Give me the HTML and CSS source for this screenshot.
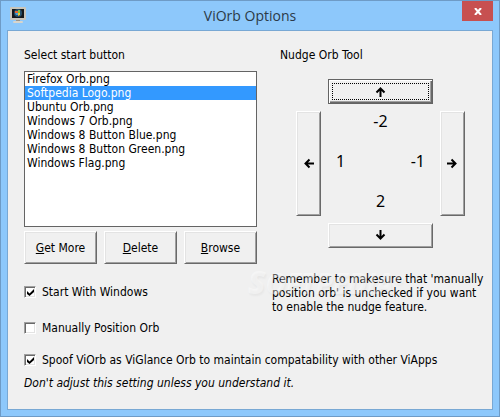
FILE: index.html
```html
<!DOCTYPE html>
<html lang="en">
  <head>
    <meta charset="utf-8" />
    <title>ViOrb Options</title>
    <link rel="stylesheet" href="styles.css">
  </head>
  <body>
    <div class="window">
      <div class="titlebar">
        <svg class="app-icon" width="16" height="16" viewBox="0 0 16 16">
          <rect x="0" y="0" width="16" height="13" rx="1" fill="#c9c5ba" />
          <rect x="2" y="2" width="12" height="9" fill="#14181b" />
          <circle cx="8" cy="6" r="4" fill="#27506b" />
          <path d="M5 4h3v2H5z" fill="#e8632b" />
          <path d="M8 3h2v3H8z" fill="#7cc243" />
          <path d="M5 6h3v2H6z" fill="#3a9fd8" />
          <path d="M8 6h2v2l-2 1z" fill="#f3c62d" />
          <rect x="6" y="13" width="4" height="1" fill="#98958c" />
          <rect x="3" y="14" width="10" height="2" rx="1" fill="#d8d5cc" />
        </svg>
        <h1 class="title">ViOrb Options</h1>
        <button class="close" type="button" aria-label="Close">
          <svg width="8" height="7" viewBox="0 0 8 7">
            <path d="M1 0l6 7M7 0l-6 7" stroke="#fff" stroke-width="2" />
          </svg>
        </button>
      </div>

      <form class="panel">
        <div class="columns">
          <div class="orbs">
            <label class="heading" for="orbList">Select start button</label>
            <select class="orb-list" id="orbList" size="11">
              <option>Firefox Orb.png</option>
              <option selected>Softpedia Logo.png</option>
              <option>Ubuntu Orb.png</option>
              <option>Windows 7 Orb.png</option>
              <option>Windows 8 Button Blue.png</option>
              <option>Windows 8 Button Green.png</option>
              <option>Windows Flag.png</option>
            </select>
            <div class="actions">
              <button class="button" type="button"><u>G</u>et More</button>
              <button class="button" type="button"><u>D</u>elete</button>
              <button class="button" type="button"><u>B</u>rowse</button>
            </div>
            <label class="check"><input type="checkbox" checked />Start With Windows</label>
            <label class="check"><input type="checkbox" />Manually Position Orb</label>
          </div>

          <div class="nudge">
            <h2 class="heading nudge-heading">Nudge Orb Tool</h2>
            <div class="pad">
              <button class="button up focused" type="button" aria-label="Up">
                <svg width="11" height="11" viewBox="0 0 11 11"><path d="M5.500 11V2M1.500 6.500l4-4 4 4" /></svg>
              </button>
              <button class="button left" type="button" aria-label="Left">
                <svg width="11" height="11" viewBox="0 0 11 11"><path d="M11 5.500H2M6.500 1.500l-4 4 4 4" /></svg>
              </button>
              <div class="offsets">
                <span class="offset-up">-2</span>
                <span class="offset-left">1</span>
                <span class="offset-right">-1</span>
                <span class="offset-down">2</span>
              </div>
              <button class="button right" type="button" aria-label="Right">
                <svg width="11" height="11" viewBox="0 0 11 11"><path d="M0 5.500h9M4.500 1.500l4 4-4 4" /></svg>
              </button>
              <button class="button down" type="button" aria-label="Down">
                <svg width="11" height="11" viewBox="0 0 11 11"><path d="M5.500 0v9M1.500 4.500l4 4 4-4" /></svg>
              </button>
            </div>
            <div class="reminder">
              <p>Remember to makesure that 'manually position orb' is unchecked if you want to enable the nudge feature.</p>
              <div class="watermark"><b>S</b>OFTPEDIA<sup>®</sup></div>
            </div>
          </div>
        </div>

        <label class="check spoof"><input type="checkbox" checked />Spoof ViOrb as ViGlance Orb to maintain compatability with other ViApps</label>
        <p class="warning">Don't adjust this setting unless you understand it.</p>
      </form>
    </div>
  </body>
</html>
```
FILE: styles.css
```css
* {
  box-sizing: border-box;
}
body {
  margin: 0;
  font: 12px/14px Tahoma, 'DejaVu Sans Condensed', sans-serif;
  color: #000;
}
h1,
h2,
p {
  margin: 0;
  font-weight: normal;
}
.window {
  min-height: 100vh;
  display: flex;
  flex-direction: column;
  padding: 0 6px 6px;
  border: 1px solid #6e9bc6;
  background-color: #8dc8fb;
}
.titlebar {
  display: grid;
  grid-template-columns: 31px 1fr 31px;
  height: 29px;
}
.app-icon {
  margin: 6px 0 0 3px;
}
.title {
  align-self: center;
  text-align: center;
  font: 14px/20px 'Open Sans', sans-serif;
  color: #2b3a47;
}
.close {
  display: flex;
  align-items: center;
  justify-content: center;
  height: 20px;
  padding: 0;
  border: 0;
  background-color: #c75050;
}
.panel {
  flex: 1;
  padding: 17px 4px 8px 16px;
  border: 1px solid #78a8d4;
  background-color: #f0f0f0;
}
.columns {
  display: grid;
  grid-template-columns: 233px 1fr;
  gap: 15px;
}
.heading {
  display: block;
  margin-bottom: 9px;
  font-size: 12px;
  line-height: 14px;
}
.orb-list {
  display: block;
  width: 100%;
  height: 156px;
  padding: 0;
  border: 1px solid #646464;
  border-radius: 0;
  background-color: #fff;
  font: inherit;
  color: #000;
  overflow: hidden;
  outline: none;
}
.orb-list option {
  display: flex;
  align-items: center;
  height: 14px;
  min-height: 0;
  padding: 0 2px;
}
.orb-list option:checked {
  background: linear-gradient(#3399ff, #3399ff);
  -webkit-text-fill-color: #fff;
}
.button {
  display: flex;
  align-items: center;
  justify-content: center;
  padding: 0;
  border: 1px solid;
  border-color: #fff #696969 #696969 #fff;
  border-radius: 0;
  background-color: #f0f0f0;
  box-shadow: inset 1px 1px #e3e3e3, inset -1px -1px #a0a0a0;
  font: inherit;
  color: #000;
}
.button path {
  fill: none;
  stroke: #000;
  stroke-width: 2;
}
.actions {
  display: grid;
  grid-template-columns: repeat(3, 1fr);
  gap: 7px;
  margin: 4px 0 21px;
}
.actions .button {
  height: 33px;
  white-space: pre;
}
.check {
  display: flex;
  align-items: center;
  gap: 6px;
  margin-bottom: 22px;
}
.check input {
  appearance: none;
  width: 12px;
  height: 12px;
  margin: 0;
  border: 1px solid;
  border-color: #a0a0a0 #fff #fff #a0a0a0;
  background-color: #fff;
  box-shadow: inset 1px 1px #696969, inset -1px -1px #e3e3e3;
}
.check input:checked::before {
  content: '';
  display: block;
  width: 7px;
  height: 7px;
  margin: 2px;
  background-color: #000;
  clip-path: polygon(0 29%, 36% 64%, 100% 0, 100% 43%, 36% 100%, 0 71%);
}
.nudge-heading {
  margin: 0 0 17px 8px;
}
.pad {
  display: grid;
  grid-template-columns: 25px 105px 25px;
  grid-template-rows: 25px 105px 25px;
  gap: 7px;
  margin: 0 0 24px 24px;
}
.up,
.down {
  grid-column: 2;
}
.left {
  grid-column: 1;
}
.focused {
  border-color: #646464;
  box-shadow: inset 1px 1px #fff, inset -1px -1px #696969, inset -2px -2px #a0a0a0;
  outline: 1px dotted #000;
  outline-offset: -5px;
}
.offsets {
  display: grid;
  grid-template-areas: 'up up' 'left right' 'down down';
  grid-template-rows: 20px 60px 20px;
  align-items: center;
  padding: 0 8px;
  font: 16px 'Noto Sans', sans-serif;
}
.offset-up {
  grid-area: up;
  text-align: center;
}
.offset-left {
  grid-area: left;
}
.offset-right {
  grid-area: right;
  text-align: right;
}
.offset-down {
  grid-area: down;
  text-align: center;
}
.reminder {
  position: relative;
}
.watermark {
  position: absolute;
  top: -6px;
  left: -24px;
  font: italic bold 28px/32px 'Open Sans', sans-serif;
  color: rgba(255, 255, 255, 0.4);
  text-shadow: 1px 2px 2px rgba(0, 0, 0, 0.04);
  white-space: nowrap;
  pointer-events: none;
}
.watermark b {
  font-size: 32px;
}
.watermark sup {
  font-size: 12px;
  line-height: 0;
}
.spoof {
  margin: -4px 0 9px;
}
.warning {
  font-style: italic;
}
```
